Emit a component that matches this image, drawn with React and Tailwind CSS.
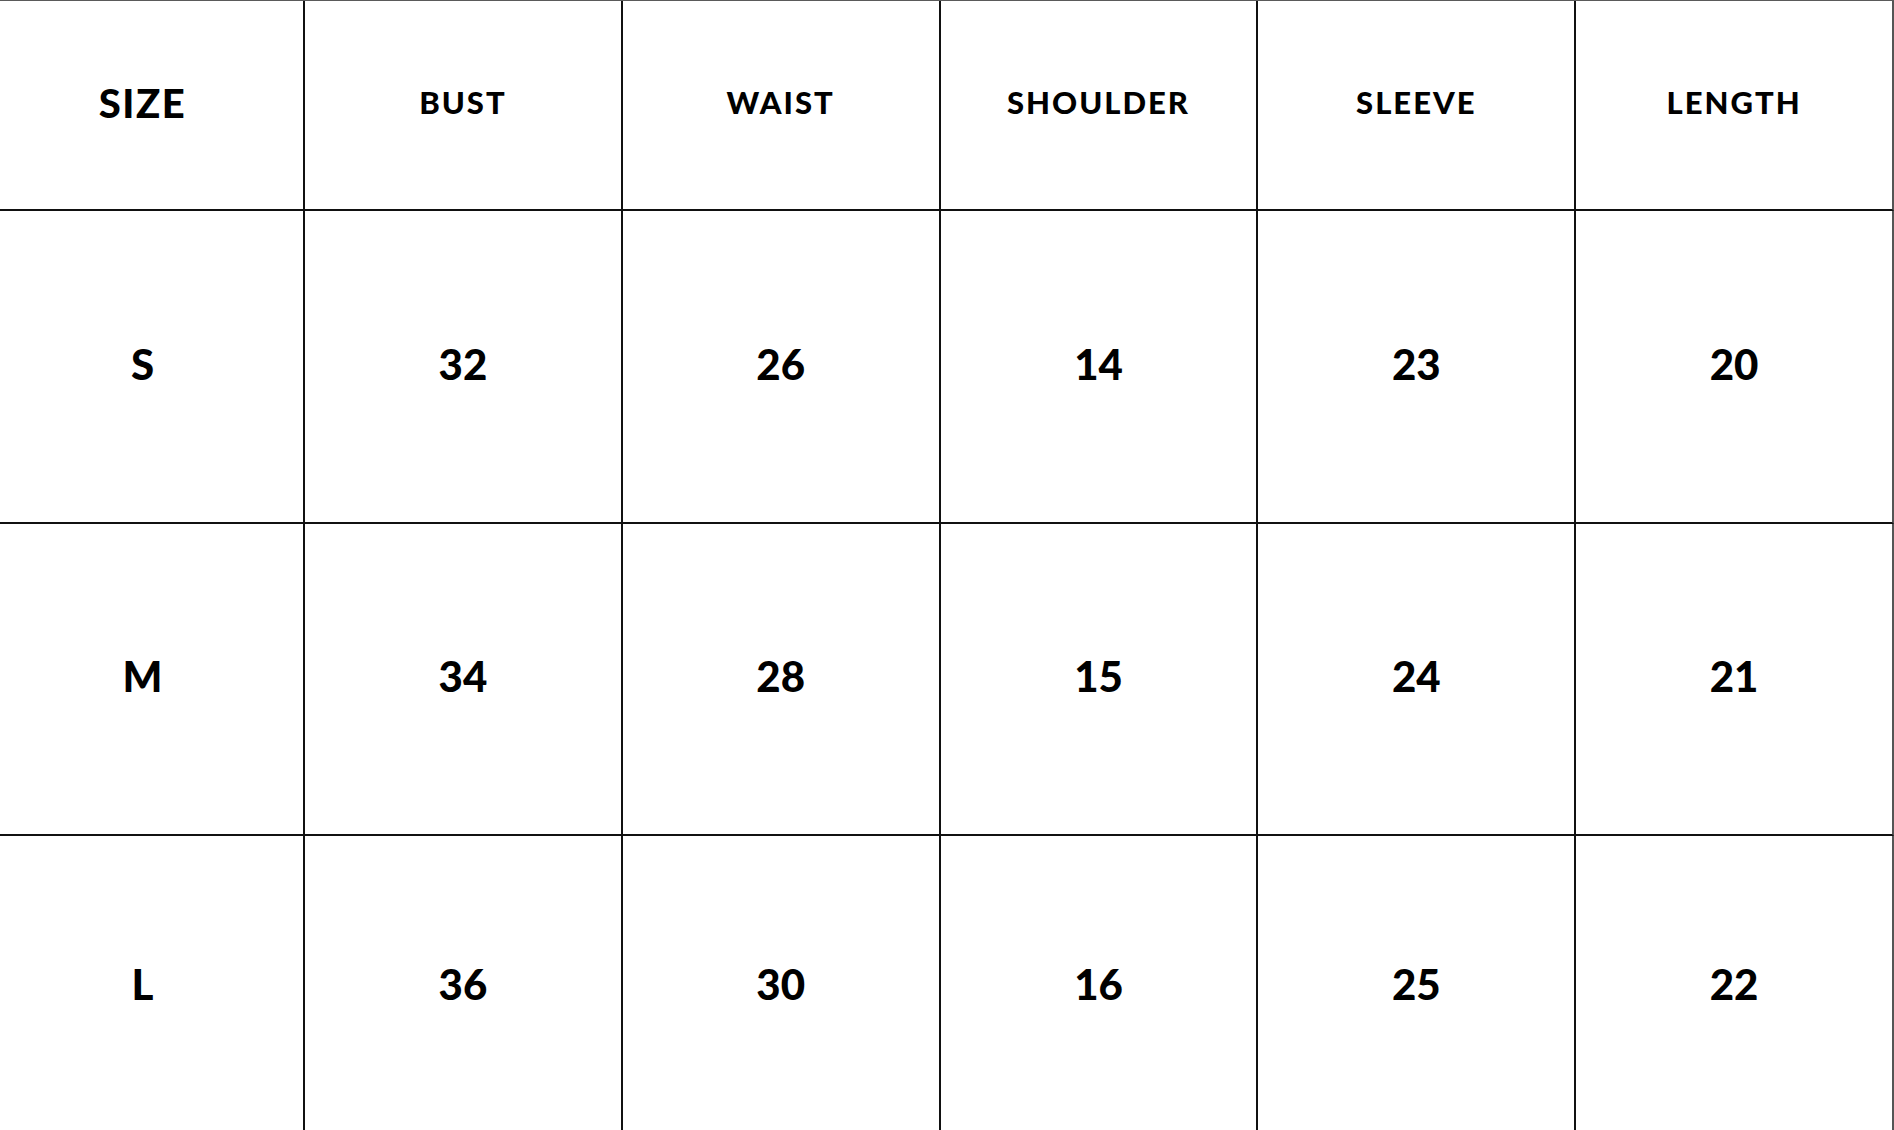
import React from 'react';

const headers = ['BUST', 'WAIST', 'SHOULDER', 'SLEEVE', 'LENGTH'];

const rows = [
    { size: 'S', values: [32, 26, 14, 23, 20] },
    { size: 'M', values: [34, 28, 15, 24, 21] },
    { size: 'L', values: [36, 30, 16, 25, 22] }
];

export default function App() {
    const cell = 'flex items-center justify-center pb-[5px] border-r-2 border-b-2 border-[#111]';

    return (
        <div className="h-[1130px] w-full overflow-hidden bg-white" style={{ fontFamily: 'Lato, "Liberation Sans", sans-serif' }}>
            <div className="grid h-[1138px] grid-cols-[305px_repeat(5,1fr)] grid-rows-[210px_313px_312px_303px] border-t border-[#5a5a5a] text-black">
                <div className={`${cell} pr-[18px] text-[40px] font-black tracking-[1.5px]`}>SIZE</div>
                {headers.map((h, i) => (
                    <div
                        key={h}
                        className={`${cell} text-[31px] font-black tracking-[2px] ${i === headers.length - 1 ? 'border-r-[#555]' : ''}`}
                    >
                        {h}
                    </div>
                ))}

                {rows.map((row) => (
                    <React.Fragment key={row.size}>
                        <div className={`${cell} pr-[18px] text-[42px] font-black`}>{row.size}</div>
                        {row.values.map((v, i) => (
                            <div
                                key={i}
                                className={`${cell} text-[42px] font-black ${i === row.values.length - 1 ? 'border-r-[#555]' : ''}`}
                            >
                                {v}
                            </div>
                        ))}
                    </React.Fragment>
                ))}
            </div>
        </div>
    );
}
